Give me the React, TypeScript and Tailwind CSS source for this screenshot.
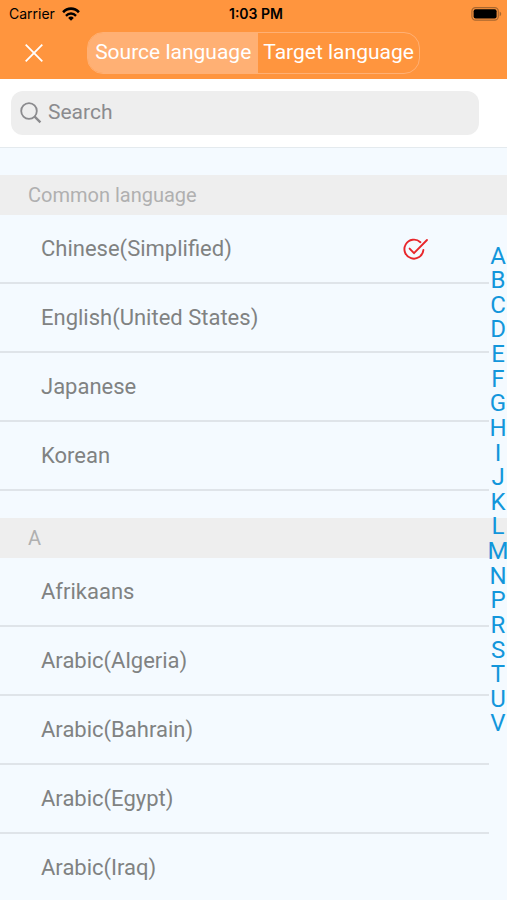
import { useState } from "react"

type Section = {
  title: string
  items: string[]
}

const sections: Section[] = [
  {
    title: "Common language",
    items: ["Chinese(Simplified)", "English(United States)", "Japanese", "Korean"],
  },
  {
    title: "A",
    items: ["Afrikaans", "Arabic(Algeria)", "Arabic(Bahrain)", "Arabic(Egypt)", "Arabic(Iraq)"],
  },
]

const letters = "ABCDEFGHIJKLMNPRSTUV".split("")

function StatusBar() {
  return (
    <div className="grid h-7 grid-cols-3 items-center pl-[9px] pr-1 font-['Inter','Liberation_Sans',sans-serif] text-sm text-black">
      <div className="flex items-center gap-[7px]">
        <span>Carrier</span>
        <svg width="18" height="14" viewBox="0 0 20 14" preserveAspectRatio="none" fill="none" stroke="currentColor">
          <path d="M1.2 5.3A12.4 12.4 0 0 1 18.8 5.3" strokeWidth="2.9" />
          <path d="M4.4 8.9a7.8 7.8 0 0 1 11.2 0" strokeWidth="2.6" />
          <path d="M10 13.8 6.9 10.9a4.4 4.4 0 0 1 6.2 0z" fill="currentColor" stroke="none" />
        </svg>
      </div>
      <span className="text-center font-semibold">1:03 PM</span>
      <svg className="justify-self-end" width="32" height="14" viewBox="0 0 32 14">
        <rect x="0.9" y="0.6" width="26.4" height="12.6" rx="3.6" fill="none" stroke="#a9672f" strokeWidth="1.2" />
        <rect x="2.6" y="2.3" width="23" height="9.2" rx="2" fill="#000" />
        <path d="M28.6 4.6v4.6c1-.4 1.6-1.3 1.6-2.3s-.6-1.9-1.6-2.3z" fill="#a9672f" />
      </svg>
    </div>
  )
}

export default function App() {
  const [tab, setTab] = useState<"source" | "target">("source")
  const [query, setQuery] = useState("")
  const [selected, setSelected] = useState("Chinese(Simplified)")

  return (
    <div className="flex h-screen flex-col bg-[#f4faff] font-['Roboto','Liberation_Sans',sans-serif]">
      <header className="shrink-0 bg-[#ff953e]">
        <StatusBar />
        <div className="flex h-[51px] items-center pb-[2px]">
          <div className="flex flex-1">
            <button type="button" aria-label="Close" className="ml-5 p-1 text-white">
              <svg width="20" height="20" viewBox="0 0 20 20" fill="none" stroke="currentColor" strokeWidth="1.8">
                <path d="M1.7 1.7l16.6 16.6M18.3 1.7 1.7 18.3" />
              </svg>
            </button>
          </div>
          <div className="flex h-[42px] overflow-hidden rounded-2xl border border-[#ffb074] text-[21px] text-white">
            <button
              type="button"
              aria-pressed={tab === "source"}
              onClick={() => setTab("source")}
              className={`px-[7px] ${tab === "source" ? "bg-[#ffb074]" : ""}`}
            >
              Source language
            </button>
            <button
              type="button"
              aria-pressed={tab === "target"}
              onClick={() => setTab("target")}
              className={`px-[5px] ${tab === "target" ? "bg-[#ffb074]" : ""}`}
            >
              Target language
            </button>
          </div>
          <div className="flex-1" />
        </div>
      </header>

      <main className="relative flex min-h-0 flex-1 flex-col">
        <div className="shrink-0 border-b border-[#e4eaee] bg-white pb-3 pl-[11px] pr-7 pt-3">
          <label className="flex h-11 items-center gap-[6px] rounded-xl bg-[#eeeeee] pl-[9px] text-[#8b8b8e]">
            <svg width="22" height="22" viewBox="0 0 22 22" fill="none" stroke="currentColor" strokeWidth="1.8">
              <circle cx="9" cy="9" r="7.8" />
              <path d="M14.4 14.4l6 6" strokeWidth="2.4" />
            </svg>
            <input
              type="text"
              aria-label="Search"
              placeholder="Search"
              value={query}
              onChange={(e) => setQuery(e.target.value)}
              className="min-w-0 flex-1 bg-transparent text-[21px] text-[#555] outline-none placeholder:text-[#8b8b8e]"
            />
          </label>
        </div>

        <div className="min-h-0 flex-1 overflow-y-auto [scrollbar-width:none]">
          {sections.map((section) => (
            <section key={section.title} className="pt-[27px]">
              <h2 className="flex h-10 items-center bg-[#eeeeee] pl-7 text-xl text-[#b0b0b0]">{section.title}</h2>
              <ul className="mr-[18px]">
                {section.items
                  .filter((name) => name.toLowerCase().includes(query.toLowerCase()))
                  .map((name) => (
                    <li key={name} className="border-b-2 border-[#dfe4e9]">
                      <button
                        type="button"
                        onClick={() => setSelected(name)}
                        className="flex h-[67px] w-full items-center justify-between pl-[41px] pr-[60px] text-left text-[22px] text-[#808282]"
                      >
                        {name}
                        {selected === name && (
                          <svg width="26" height="24" viewBox="0 0 26 24" fill="none" stroke="#e8262b" strokeWidth="1.9" strokeLinecap="round" strokeLinejoin="round">
                            <path d="M17.4 5.2A9.5 9.5 0 1 0 20.4 13" />
                            <path d="M6.6 11.6l4.4 4.6L24 3" />
                          </svg>
                        )}
                      </button>
                    </li>
                  ))}
              </ul>
            </section>
          ))}
        </div>

        {/* Letter index */}
        <nav aria-label="Index" className="absolute inset-y-0 right-0 flex w-[18px] items-center">
          <div className="flex h-3/5 w-full flex-col">
            {letters.map((letter) => (
              <a
                key={letter}
                href={`#${letter}`}
                className="flex min-h-0 flex-1 items-center justify-center text-2xl leading-none text-[#1296db]"
              >
                {letter}
              </a>
            ))}
          </div>
        </nav>
      </main>
    </div>
  )
}
